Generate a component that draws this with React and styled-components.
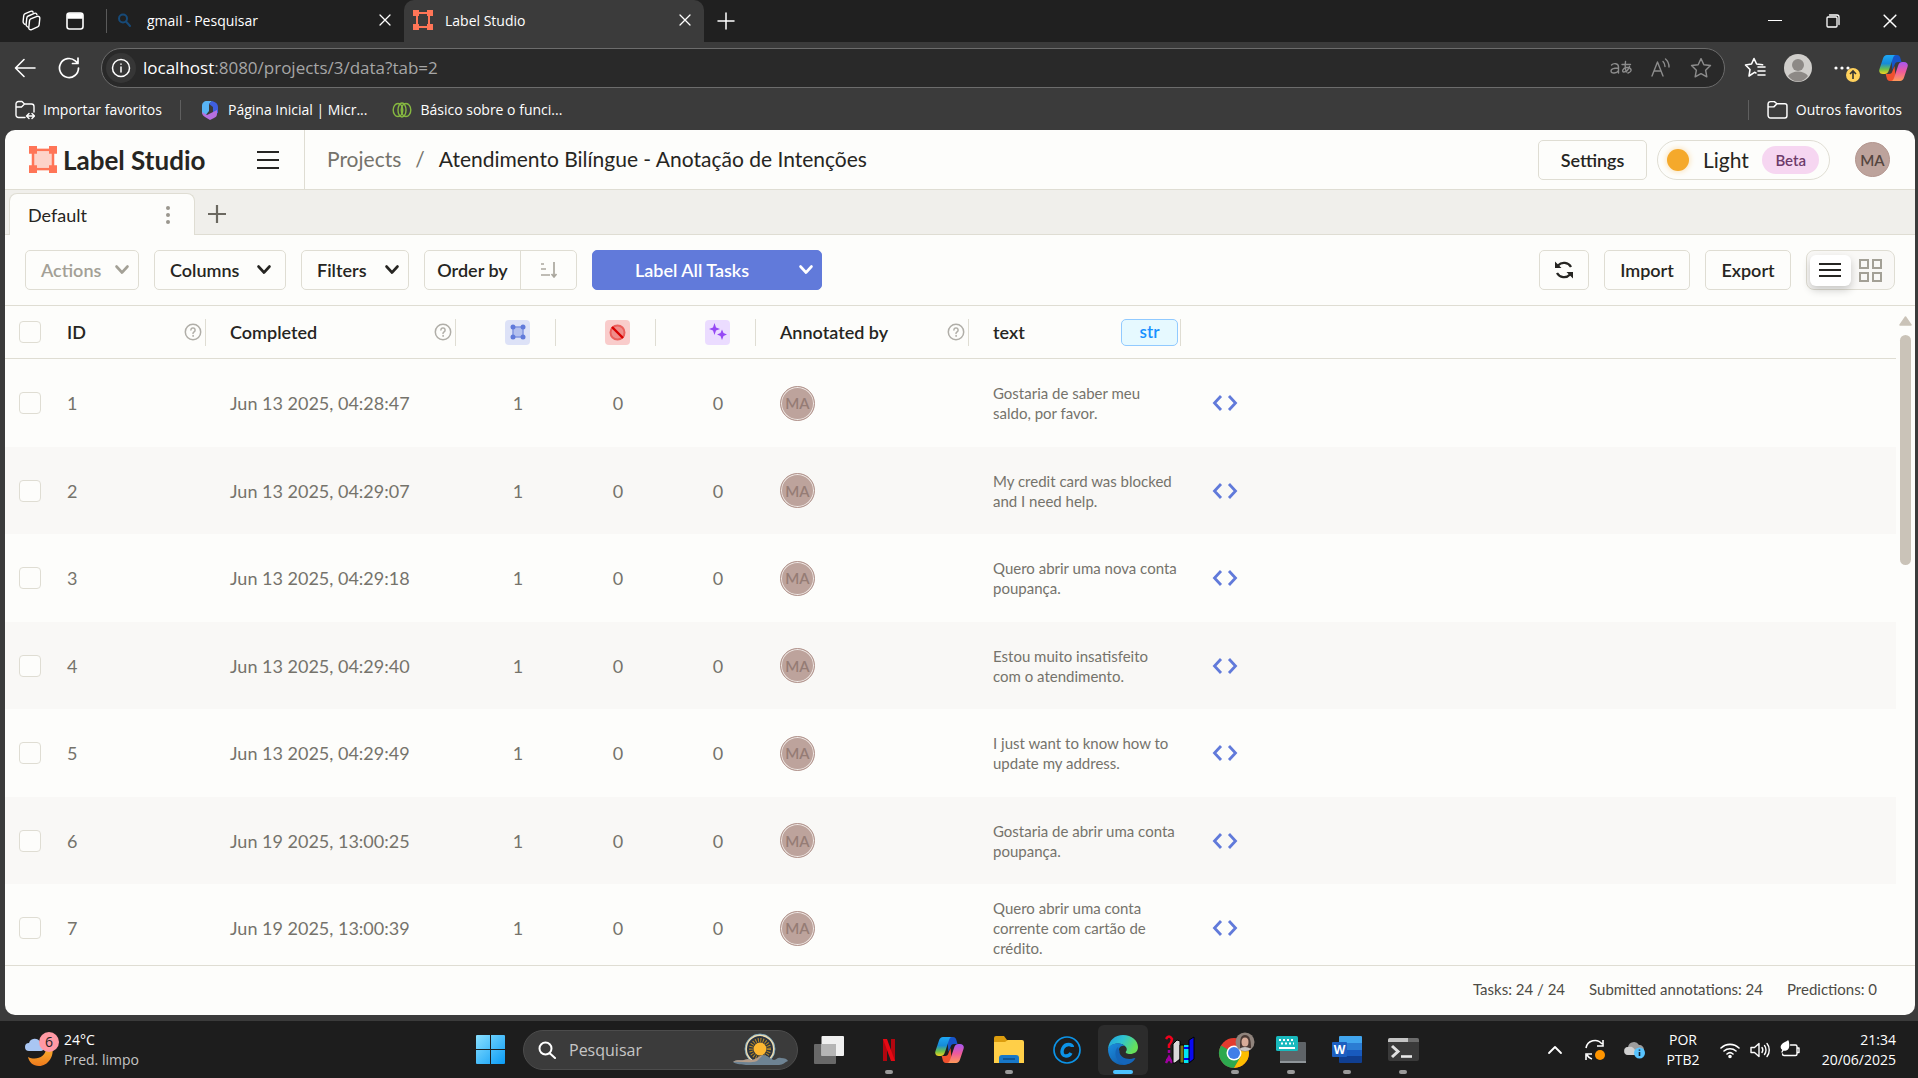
import React from "react";
import styled, { createGlobalStyle, css } from "styled-components";

const UI = '"Open Sans", "Noto Sans", sans-serif';
const APP = 'Lato, "Liberation Sans", sans-serif';
const LINE = "#dfddd3";

const Global = createGlobalStyle`
  *, *::before, *::after { box-sizing: border-box; }
  html, body { margin: 0; padding: 0; height: 100%; overflow: hidden; }
  button, input { font: inherit; color: inherit; margin: 0; }
  button { background: none; border: 0; padding: 0; cursor: pointer; }
  a { color: inherit; text-decoration: none; }
  svg { display: block; flex: none; }
`;

const Desktop = styled.div`
  display: flex;
  flex-direction: column;
  height: 100vh;
  background: #3b3b3b;
  font-family: ${UI};
`;

/* ---------- browser chrome ---------- */

const TabStrip = styled.header`
  display: flex;
  align-items: center;
  height: 42px;
  flex: none;
  background: #202020;
  color: #fff;
  font-size: 14px;
`;
const StripTools = styled.div`
  display: flex;
  align-items: center;
  gap: 24px;
  width: 107px;
  padding-left: 20px;
  height: 24px;
  border-right: 1px solid #5a5a5a;
`;
const IconButton = styled.button`
  display: flex;
  align-items: center;
  justify-content: center;
  flex: none;
  width: ${(p) => p.$w || 24}px;
  height: ${(p) => p.$h || 24}px;
`;
const BrowserTab = styled.div`
  display: flex;
  align-items: center;
  gap: ${(p) => (p.$active ? 12 : 15)}px;
  width: ${(p) => (p.$active ? 300 : 297)}px;
  height: 42px;
  padding: 0 13px 2px 9px;
  border-radius: 10px 10px 0 0;
  background: ${(p) => (p.$active ? "#3b3b3b" : "transparent")};
`;
const TabTitle = styled.a`
  flex: 1;
  white-space: nowrap;
`;
const WindowControls = styled.div`
  display: flex;
  margin-left: auto;
`;

const NavBar = styled.div`
  display: flex;
  align-items: center;
  height: 51px;
  flex: none;
  padding: 0 10px 0 13px;
  color: #fff;
`;
const NavButtons = styled.div`
  display: flex;
  gap: 20px;
  width: 88px;
`;
const Omnibox = styled.label`
  display: flex;
  align-items: center;
  flex: 1;
  height: 40px;
  padding: 0 11px 0 4px;
  border: 1px solid #6c6c6c;
  border-radius: 20px;
  background: #292929;
  font-size: 17px;
`;
const InfoDisc = styled.span`
  display: flex;
  align-items: center;
  justify-content: center;
  width: 30px;
  height: 30px;
  margin-right: 7px;
  border-radius: 50%;
  background: #363636;
`;
const UrlInput = styled.input`
  flex: 1;
  min-width: 0;
  padding: 0;
  border: 0;
  outline: 0;
  background: none;
  color: #a6a6a6;
`;
const OmniActions = styled.div`
  display: flex;
  gap: 16px;
  color: #8c8c8c;
`;
const NavActions = styled.div`
  display: flex;
  align-items: center;
  gap: 16px;
  padding-left: 17px;
`;
const Favorites = styled.nav`
  display: flex;
  align-items: center;
  height: 37px;
  flex: none;
  padding: 0 16px 4px 15px;
  color: #fff;
  font-size: 14px;
`;
const Favorite = styled.a`
  display: flex;
  align-items: center;
  gap: 8px;
  margin-right: ${(p) => p.$after || 0}px;
  margin-left: ${(p) => p.$before || 0}px;
  white-space: nowrap;
`;
const FavoritesRule = styled.span`
  width: 1px;
  height: 20px;
  background: #5f5f5f;
  margin-left: ${(p) => (p.$end ? "auto" : 0)};
`;

/* ---------- Label Studio page ---------- */

const Page = styled.main`
  display: flex;
  flex-direction: column;
  flex: 1;
  min-height: 0;
  margin: 0 3px 6px 5px;
  border-radius: 10px;
  overflow: hidden;
  background: #fdfdfb;
  color: #262522;
  font-family: ${APP};
  font-size: 18px;
`;
const TopBar = styled.header`
  display: flex;
  align-items: center;
  height: 60px;
  flex: none;
  border-bottom: 1px solid ${LINE};
`;
const Brand = styled.div`
  display: flex;
  align-items: center;
  justify-content: space-between;
  width: 300px;
  height: 100%;
  padding: 0 25px 0 24px;
  border-right: 1px solid ${LINE};
`;
const BrandLink = styled.a`
  display: flex;
  align-items: center;
  gap: 6px;
  font-size: 26px;
  font-weight: 700;
`;
const Crumbs = styled.nav`
  display: flex;
  flex: 1;
  gap: 14px;
  padding: 0 0 2px 22px;
  font-size: 21px;
  white-space: nowrap;
`;
const Crumb = styled.a`
  color: ${(p) => (p.$current ? "#262522" : "#75736b")};
`;
const TopActions = styled.div`
  display: flex;
  align-items: center;
  gap: 10px;
  padding-right: 25px;
`;
const Button = styled.button`
  display: flex;
  align-items: center;
  justify-content: ${(p) => (p.$menu ? "space-between" : "center")};
  width: ${(p) => p.$w}px;
  height: 40px;
  padding: ${(p) => (p.$menu ? "0 8px 0 15px" : "0")};
  border: 1px solid ${LINE};
  border-radius: 5px;
  background: #fdfdfb;
  font-size: 18px;
  font-weight: 600;
  white-space: nowrap;
  ${(p) => p.$roomy && css`padding-right: 13px;`}
  &:disabled { color: #a3a096; }
`;
const ThemeToggle = styled.button`
  display: flex;
  align-items: center;
  width: 173px;
  height: 40px;
  padding: 0 10px 0 9px;
  border: 1px solid ${LINE};
  border-radius: 20px;
  font-size: 21px;
`;
const Sun = styled.span`
  width: 22px;
  height: 22px;
  margin-right: 14px;
  border-radius: 50%;
  background: #f5a92b;
  box-shadow: 0 0 6px #f9d9a4;
`;
const Beta = styled.span`
  margin-left: auto;
  padding: 0 13px;
  border-radius: 14px;
  background: #f6d6f1;
  color: #6d3b6a;
  font-size: 15px;
  font-weight: 600;
  line-height: 28px;
`;
const Avatar = styled.span`
  display: flex;
  align-items: center;
  justify-content: center;
  width: 35px;
  height: 35px;
  margin-left: ${(p) => (p.$user ? 15 : 0)}px;
  border: 1px solid #b3968f;
  border-radius: 50%;
  background: #bda39c;
  color: ${(p) => (p.$user ? "#54463f" : "#957c75")};
  font-size: 15px;
  font-weight: 600;
  ${(p) => !p.$user && css`box-shadow: inset 0 0 0 1px #efe8e4;`}
`;

const ViewTabs = styled.div`
  display: flex;
  align-items: flex-end;
  height: 45px;
  flex: none;
  padding-left: 4px;
  background: #f0efeb;
  box-shadow: inset 0 -1px ${LINE};
`;
const ViewTab = styled.div`
  display: flex;
  align-items: center;
  justify-content: space-between;
  width: 186px;
  height: 42px;
  padding: 0 18px;
  border: 1px solid ${LINE};
  border-bottom: 0;
  border-radius: 8px 8px 0 0;
  background: #fdfdfb;
`;

const Toolbar = styled.div`
  display: flex;
  align-items: center;
  justify-content: space-between;
  height: 71px;
  flex: none;
  padding: 0 20px;
  border-bottom: 1px solid ${LINE};
`;
const ToolGroup = styled.div`
  display: flex;
  gap: 15px;
`;
const Split = styled.div`
  display: flex;
  height: 40px;
  border: 1px solid ${(p) => (p.$primary ? "#617ada" : LINE)};
  border-radius: 5px;
  overflow: hidden;
  background: ${(p) => (p.$primary ? "#617ada" : "#fdfdfb")};
  color: ${(p) => (p.$primary ? "#fff" : "#262522")};
`;
const SplitPart = styled.button`
  display: flex;
  align-items: center;
  justify-content: center;
  width: ${(p) => p.$w}px;
  font-size: 18px;
  font-weight: 600;
  border-left: ${(p) => (p.$divided ? `1px solid ${LINE}` : 0)};
`;
const Segments = styled.div`
  display: flex;
  align-items: center;
  width: 89px;
  height: 40px;
  padding: 0 3px;
  border: 1px solid ${LINE};
  border-radius: 8px;
  background: #f9f8f6;
`;
const Segment = styled.button`
  display: flex;
  align-items: center;
  justify-content: center;
  width: 41px;
  height: 31px;
  border-radius: 6px;
  ${(p) => p.$on && css`background: #fff; box-shadow: 0 4px 8px #0003;`}
`;

const DataArea = styled.div`
  display: flex;
  flex: 1;
  min-height: 0;
`;
const TableClip = styled.div`
  flex: 1;
  min-width: 0;
  overflow: hidden;
`;
const Table = styled.table`
  width: 100%;
  table-layout: fixed;
  border-collapse: separate;
  border-spacing: 0;
`;
const Col = styled.col`
  width: ${(p) => (p.$w ? `${p.$w}px` : "auto")};
`;
const Th = styled.th`
  height: 53px;
  padding: 0;
  border-bottom: 1px solid ${LINE};
  font-size: 18px;
  font-weight: 600;
  text-align: left;
`;
const ThInner = styled.div`
  display: flex;
  align-items: center;
  justify-content: ${(p) => (p.$center ? "center" : "space-between")};
  height: 27px;
  padding: 0 ${(p) => (p.$center ? 0 : p.$tight ? 2 : 3)}px 0 24px;
  border-right: 1px solid ${LINE};
`;
const TypeTag = styled.span`
  width: 57px;
  height: 27px;
  border: 1px solid #91caff;
  border-radius: 5px;
  background: #e6f9ff;
  color: #1890ff;
  font-size: 17px;
  line-height: 24px;
  text-align: center;
`;
const MiniBadge = styled.span`
  display: flex;
  align-items: center;
  justify-content: center;
  width: 25px;
  height: 25px;
  border-radius: 4px;
  background: ${(p) => p.$bg};
`;
const Row = styled.tr`
  height: 88px;
  &:nth-child(even) {
    height: 87px;
    background: #f9f8f6;
  }
`;
const Td = styled.td`
  padding: 0 0 0 24px;
  color: #75736b;
  font-size: 18px;
  text-align: ${(p) => (p.$center ? "center" : "left")};
  vertical-align: middle;
`;
const CheckCell = styled.td`
  padding: 0 0 0 14px;
  vertical-align: middle;
`;
const Check = styled.input`
  display: block;
  appearance: none;
  width: 22px;
  height: 22px;
  border: 1px solid ${LINE};
  border-radius: 4px;
  background: #fdfdfb;
`;
const Snippet = styled.p`
  width: 184px;
  margin: 0;
  font-size: 15px;
  line-height: 20px;
`;
const Scrollbar = styled.div`
  display: flex;
  flex-direction: column;
  align-items: center;
  gap: 9px;
  width: 19px;
  padding: 10px 0 0;
`;
const Thumb = styled.div`
  width: 11px;
  height: 230px;
  border-radius: 6px;
  background: #cac3b8;
`;
const Summary = styled.footer`
  display: flex;
  align-items: center;
  justify-content: flex-end;
  gap: 24px;
  height: 50px;
  flex: none;
  padding: 0 38px 3px 0;
  border-top: 1px solid ${LINE};
  color: #4d4b45;
  font-size: 15px;
`;

/* ---------- Windows taskbar ---------- */

const Taskbar = styled.footer`
  display: grid;
  grid-template-columns: 462px 1fr auto;
  align-items: center;
  height: 57px;
  flex: none;
  padding-right: 22px;
  background: #1d1d1d;
  color: #fff;
  font-size: 14px;
`;
const Weather = styled.button`
  display: flex;
  align-items: center;
  gap: 4px;
  padding-left: 24px;
  text-align: left;
  line-height: 20px;
`;
const Dim = styled.span`
  display: block;
  color: #c4c4c4;
`;
const Apps = styled.div`
  display: flex;
  align-items: center;
`;
const TaskSearch = styled.label`
  display: flex;
  align-items: center;
  width: 275px;
  height: 40px;
  padding: 0 9px 0 14px;
  margin: 0 1px 0 5px;
  border: 1px solid #4c4c4c;
  border-radius: 20px;
  background: #3b3b3b;
`;
const TaskInput = styled.input`
  flex: 1;
  min-width: 0;
  padding: 0 0 0 13px;
  border: 0;
  outline: 0;
  background: none;
  font-size: 16px;
  &::placeholder { color: #c6c6c6; opacity: 1; }
`;
const Task = styled.button`
  display: grid;
  grid-template-rows: 40px 5px;
  align-content: end;
  justify-items: center;
  align-items: center;
  width: ${(p) => (p.$wide ? 60 : 50)}px;
  height: 50px;
  margin: 0 ${(p) => (p.$wide ? 0 : 3)}px;
  border-radius: 6px;
  background: ${(p) => (p.$active ? "#2c2c2c" : "none")};
  &::after {
    content: "";
    width: ${(p) => (p.$active ? 20 : 8)}px;
    height: 4px;
    border-radius: 2px;
    background: ${(p) => (p.$active ? "#4cc2ff" : p.$running ? "#9a9a9a" : "transparent")};
  }
`;
const StartButton = styled.button`
  display: flex;
  justify-content: center;
  width: 56px;
`;
const Tray = styled.div`
  display: flex;
  align-items: center;
  line-height: 20px;
`;
const TrayItem = styled.button`
  display: flex;
  align-items: center;
  justify-content: center;
  gap: 10px;
  width: ${(p) => p.$w}px;
  text-align: center;
`;
const Clock = styled.button`
  width: 87px;
  text-align: right;
`;

/* ---------- icons ---------- */

const Stroke = ({ size = 20, w = 1.5, children, box = 20 }) => (
  <svg width={size} height={size} viewBox={`0 0 ${box} ${box}`} fill="none" stroke="currentColor" strokeWidth={w} strokeLinecap="round" strokeLinejoin="round">
    {children}
  </svg>
);
const CloseIcon = ({ size = 12 }) => (
  <Stroke size={size} box={12} w={1.3}><path d="M1 1l10 10M11 1L1 11" /></Stroke>
);
const Chevron = () => (
  <Stroke size={16} box={16} w={2.6}><path d="M2.500 4.500L8 10.500l5.500-6" /></Stroke>
);
const LabelMark = ({ size, height }) => (
  <svg width={size} height={height} viewBox="0 0 28 28" preserveAspectRatio="none">
    <rect x="4" y="4" width="20" height="20" fill="#ff7557" fillOpacity=".3" stroke="#ff7557" strokeWidth="2.500" />
    <path fill="#ff7557" d="M0 0h8v8H0zM20 0h8v8h-8zM0 20h8v8H0zM20 20h8v8h-8z" />
  </svg>
);
const TabMark = () => (
  <svg width="20" height="20" viewBox="0 0 20 20">
    <path fill="none" stroke="#ff7557" strokeWidth="2" d="M4 3h12v14H4z" />
    <path fill="#ff7557" d="M0 0h6v6H0zM14 0h6v6h-6zM0 14h6v6H0zM14 14h6v6h-6z" />
  </svg>
);
const Help = () => (
  <svg width="18" height="18" viewBox="0 0 18 18" fill="none" stroke="#b0aea8" strokeWidth="1.500" strokeLinecap="round">
    <circle cx="9" cy="9" r="7.700" />
    <path d="M6.900 7a2.100 2.100 0 1 1 3.200 1.800c-.7.500-1.100.9-1.100 1.700" />
    <circle cx="9" cy="12.900" r=".5" fill="#b0aea8" strokeWidth=".8" />
  </svg>
);
const Code = () => (
  <svg width="26" height="18" viewBox="0 0 26 18" fill="none" stroke="#617ada" strokeWidth="2.800">
    <path d="M9 2L2.500 9 9 16M17 2l6.500 7-6.500 7" />
  </svg>
);
const Copilot = () => (
  <svg width="29" height="28" viewBox="0 0 29 28">
    <defs>
      <linearGradient id="cpA" x1="0" y1="0" x2="0" y2="1">
        <stop offset="0" stopColor="#1ea7f5" /><stop offset=".45" stopColor="#168bd8" />
        <stop offset=".75" stopColor="#6cc04a" /><stop offset="1" stopColor="#f5d21f" />
      </linearGradient>
      <linearGradient id="cpB" x1="0" y1="0" x2="0" y2="1">
        <stop offset="0" stopColor="#a557f2" /><stop offset=".5" stopColor="#ee5a9c" /><stop offset="1" stopColor="#ff9a5a" />
      </linearGradient>
    </defs>
    <path fill="#1654c9" d="M12 1h6c2 0 3 1.500 3.500 3.500L22.500 8H19c-2 0-3 1-3.500 3l-2 5z" />
    <path fill="#f0512e" d="M17 27h-6c-2 0-3-1.500-3.400-3.500L6.700 20H10c2 0 3-1 3.500-3l2-5z" />
    <path fill="url(#cpA)" d="M8 1h9c-1.500 0-2.300 1-3 3l-4 12c-.8 2.500-2 4-4.500 4H4c-3 0-4.500-2-3.500-5L4 4.500C4.700 2.200 6 1 8 1z" />
    <path fill="url(#cpB)" d="M21 27h-9c1.500 0 2.300-1 3-3l4-12c.8-2.500 2-4 4.500-4H25c3 0 4.500 2 3.500 5L25 23.500c-.7 2.300-2 3.500-4 3.500z" />
  </svg>
);

const BrowserChrome = () => (
  <>
    <TabStrip>
      <StripTools>
        <IconButton $w={22} aria-label="Workspaces">
          <Stroke size={22} box={22} w={1.4}>
            <g transform="rotate(6 11 11)">
              <path d="M10.500 9l6-3.200c1.500-.7 3 0 3 1.700v6.500c0 1-.5 1.700-1.300 2.200l-5.700 3.300c-1.500.8-3 0-3-1.500v-7c0-.9.300-1.600 1-2z" />
              <path d="M9 17.500l-1-.4c-1-.4-1.500-1.200-1.500-2.200V8.500c0-1 .5-1.700 1.300-2.200L13.500 3c1.200-.6 2.400-.2 2.700 1" />
              <path d="M5.500 15l-1-.5C3.700 14 3.200 13.300 3.200 12.300V6.500c0-1 .5-1.700 1.300-2.200L9.500 1.500c1-.6 2.200-.4 2.700.5" />
            </g>
          </Stroke>
        </IconButton>
        <IconButton $w={18} aria-label="Tab actions">
          <Stroke size={18} box={18} w={1.6}><rect x="1" y="1" width="16" height="16" rx="2.500" /><path fill="currentColor" d="M2 2h14v4H2z" /></Stroke>
        </IconButton>
      </StripTools>
      <BrowserTab>
        <Stroke size={16} box={16} w={2}><g stroke="#174a78"><circle cx="7" cy="6.500" r="4" /><path d="M10 9.500l4 4.500" /></g></Stroke>
        <TabTitle href="#gmail">gmail - Pesquisar</TabTitle>
        <IconButton $w={12} aria-label="Close tab"><CloseIcon /></IconButton>
      </BrowserTab>
      <BrowserTab $active>
        <TabMark />
        <TabTitle href="#label-studio">Label Studio</TabTitle>
        <IconButton $w={12} aria-label="Close tab"><CloseIcon /></IconButton>
      </BrowserTab>
      <IconButton $w={44} aria-label="New tab"><Stroke size={18} box={18} w={1.5}><path d="M9 1v16M1 9h16" /></Stroke></IconButton>
      <WindowControls>
        <IconButton $w={58} aria-label="Minimize"><Stroke size={14} box={14} w={1.2}><path d="M.5 6.500h13" /></Stroke></IconButton>
        <IconButton $w={58} aria-label="Restore"><Stroke size={14} box={14} w={1.3}><rect x="1" y="3" width="10" height="10" rx="1" /><path d="M3.500 1H11c1.200 0 2 .8 2 2v7.500" /></Stroke></IconButton>
        <IconButton $w={56} aria-label="Close"><CloseIcon size={14} /></IconButton>
      </WindowControls>
    </TabStrip>
    <NavBar>
      <NavButtons>
        <IconButton aria-label="Back"><Stroke size={22} box={22} w={1.6}><path d="M21 11H2M10 2.500L1.500 11l8.500 8.500" /></Stroke></IconButton>
        <IconButton aria-label="Refresh"><Stroke size={22} box={22} w={1.7}><path d="M20.500 11a9.500 9.500 0 1 1-3.200-7.100L19.500 6M20 1v5.500h-5.500" /></Stroke></IconButton>
      </NavButtons>
      <Omnibox>
        <InfoDisc><Stroke size={20} w={1.500}><circle cx="10" cy="10" r="8.500" /><path d="M10 9v5M10 6v.2" /></Stroke></InfoDisc>
        <span>localhost</span>
        <UrlInput aria-label="Address" defaultValue=":8080/projects/3/data?tab=2" />
        <OmniActions>
          <IconButton aria-label="Translate">
            <Stroke size={24} box={24} w={1.4}>
              <path d="M2.500 9c2-2 7-2 7 2v6M9.500 12c-4 0-7.500.500-7.500 3 0 3 6 2.500 7.500-.500" />
              <path d="M13 8.500h8.500M16.500 5.500c-.5 4-.5 8 1 10.500M20.500 10.500c-1 3-3.500 5.500-5.700 5.500-2 0-1.500-4 2.700-4.500 5-.5 6.500 4 1.500 5.500" />
            </Stroke>
          </IconButton>
          <IconButton aria-label="Read aloud"><Stroke size={20} w={1.4}><path d="M1 18L6.500 4 12 18M3 13h7M12 3.500c1.500 1.500 2 3 2 5M14.500 1c2.500 2.200 3.500 5 3.500 8" /></Stroke></IconButton>
          <IconButton aria-label="Add to favorites"><Stroke size={22} w={1.3}><path d="M10 1.500l2.600 5.500 6 .8-4.400 4.200 1.100 6L10 15.100 4.700 18l1.100-6L1.400 7.800l6-.8z" /></Stroke></IconButton>
        </OmniActions>
      </Omnibox>
      <NavActions>
        <IconButton $w={26} aria-label="Favorites"><Stroke size={22} box={22} w={1.6}><path d="M12 16l-1.500-.7L5 19l1-6.500L1.500 8l6-1L10 1.500 12.600 7l6 .8M14 10h7M14 14h7M14 18h7" /></Stroke></IconButton>
        <IconButton $w={28} aria-label="Profile">
          <svg width="28" height="28" viewBox="0 0 28 28"><circle cx="14" cy="14" r="14" fill="#d0cecb" /><circle cx="14" cy="11" r="6" fill="#8d8986" /><path d="M4 22c2-3 6-4.500 10-4.500S22 19 24 22c-2.500 3.500-6 5.500-10 5.500S6.500 25.500 4 22z" fill="#8d8986" /></svg>
        </IconButton>
        <IconButton $w={34} $h={28} aria-label="Settings and more">
          <svg width="34" height="28" viewBox="0 0 34 28"><g fill="#fff"><circle cx="8" cy="14" r="1.600" /><circle cx="14" cy="14" r="1.600" /><circle cx="20" cy="14" r="1.600" /></g><circle cx="25" cy="21" r="7" fill="#ffd15c" /><path d="M25 25v-8M22 20l3-3 3 3" fill="none" stroke="#333" strokeWidth="1.600" /></svg>
        </IconButton>
        <IconButton $w={30} $h={28} aria-label="Copilot"><Copilot /></IconButton>
      </NavActions>
    </NavBar>
    <Favorites>
      <Favorite href="#import" $after={18}>
        <Stroke size={20} w={1.4}><path d="M10 17.500H3.500c-1.500 0-2.500-1-2.500-2.500V4c0-1.500 1-2.500 2.500-2.500H7L9.500 4h7C18 4 19 5 19 6.500V12M1 7h5.500l3-3M12 16h7M14 13.500L11.500 16l2.500 2.500M17 13.500l2.500 2.500-2.500 2.500" /></Stroke>
        Importar favoritos
      </Favorite>
      <FavoritesRule />
      <Favorite href="#m365" $before={19} $after={25}>
        <svg width="20" height="20" viewBox="0 0 20 20"><path fill="#58b4f5" d="M7 1h5l-3 3v7l-4 5-3-3V6c0-3 2-5 5-5z" /><path fill="#3f5fe0" d="M12 1c4 1 6 3 6 6v6l-5 2V7L9 4z" /><path fill="#b66fe0" d="M2 12l5 3 4-2 6-3v4c0 2-1 3-3 4l-4 2-5-3c-2-1-3-3-3-5z" /></svg>
        Página Inicial | Micr...
      </Favorite>
      <Favorite href="#basico">
        <Stroke size={20} w={1.4}><g stroke="#86b840"><ellipse cx="6" cy="10" rx="4.800" ry="6.500" /><ellipse cx="10" cy="10" rx="4" ry="7" /><ellipse cx="14" cy="10" rx="4.800" ry="6.500" /></g></Stroke>
        Básico sobre o funci...
      </Favorite>
      <FavoritesRule $end />
      <Favorite href="#outros" $before={18}>
        <Stroke size={21} w={1.4}><path d="M1 5c0-1.500 1-2.500 2.500-2.500H7l2.500 2H17c1.200 0 2 .9 2 2V16c0 1.200-.8 2-2 2H3.500C2 18 1 17 1 15.500zM1 7.500h5.500l3-3" /></Stroke>
        Outros favoritos
      </Favorite>
    </Favorites>
  </>
);

const ROWS = [
  [1, "Jun 13 2025, 04:28:47", "Gostaria de saber meu saldo, por favor."],
  [2, "Jun 13 2025, 04:29:07", "My credit card was blocked and I need help."],
  [3, "Jun 13 2025, 04:29:18", "Quero abrir uma nova conta poupança."],
  [4, "Jun 13 2025, 04:29:40", "Estou muito insatisfeito com o atendimento."],
  [5, "Jun 13 2025, 04:29:49", "I just want to know how to update my address."],
  [6, "Jun 19 2025, 13:00:25", "Gostaria de abrir uma conta poupança."],
  [7, "Jun 19 2025, 13:00:39", "Quero abrir uma conta corrente com cartão de crédito."],
];

const TaskTable = () => (
  <DataArea>
    <TableClip>
      <Table>
        <colgroup>
          <Col $w={38} /><Col $w={163} /><Col $w={250} /><Col $w={100} /><Col $w={100} /><Col $w={100} /><Col $w={213} /><Col $w={212} /><Col />
        </colgroup>
        <thead>
          <tr>
            <Th as={CheckCell}><Check type="checkbox" aria-label="Select all tasks" /></Th>
            <Th><ThInner>ID<Help /></ThInner></Th>
            <Th><ThInner>Completed<Help /></ThInner></Th>
            <Th>
              <ThInner $center>
                <MiniBadge $bg="#dde2f7"><svg width="16" height="16" viewBox="0 0 16 16"><path d="M3 3h10v10H3z" fill="#b4c0ee" stroke="#8296e2" strokeWidth="1.500" /><g fill="#617ada"><circle cx="3" cy="3" r="2.500" /><circle cx="13" cy="3" r="2.500" /><circle cx="3" cy="13" r="2.500" /><circle cx="13" cy="13" r="2.500" /></g></svg></MiniBadge>
              </ThInner>
            </Th>
            <Th>
              <ThInner $center>
                <MiniBadge $bg="#f9cccb"><svg width="17" height="17" viewBox="0 0 17 17"><circle cx="8.500" cy="8.500" r="7" fill="#ef8d8b" stroke="#ea5f5c" strokeWidth="2" /><path d="M3 3l11 11" stroke="#d90000" strokeWidth="2.400" /></svg></MiniBadge>
              </ThInner>
            </Th>
            <Th>
              <ThInner $center>
                <MiniBadge $bg="#ebdcff"><svg width="18" height="18" viewBox="0 0 18 18" fill="#9548f5"><path d="M5.500 0l1.500 4.500L11 6 7 7.500 5.500 12 4 7.500 0 6l4-1.500z" /><path d="M13 6.500l1.500 3.500L18 11.500 14.500 13 13 17l-1.500-4L8 11.500l3.500-1.500z" /></svg></MiniBadge>
              </ThInner>
            </Th>
            <Th><ThInner>Annotated by<Help /></ThInner></Th>
            <Th><ThInner $tight>text<TypeTag>str</TypeTag></ThInner></Th>
            <Th />
          </tr>
        </thead>
        <tbody>
          {ROWS.map(([id, date, text]) => (
            <Row key={id}>
              <CheckCell><Check type="checkbox" aria-label={`Select task ${id}`} /></CheckCell>
              <Td>{id}</Td>
              <Td>{date}</Td>
              <Td $center>1</Td>
              <Td $center>0</Td>
              <Td $center>0</Td>
              <Td><Avatar>MA</Avatar></Td>
              <Td><Snippet>{text}</Snippet></Td>
              <Td><IconButton $w={40} aria-label={`Show source of task ${id}`}><Code /></IconButton></Td>
            </Row>
          ))}
        </tbody>
      </Table>
    </TableClip>
    <Scrollbar>
      <svg width="13" height="10" viewBox="0 0 13 10"><path d="M6.500 1L12 9H1z" fill="#cac3b8" stroke="#cac3b8" strokeLinejoin="round" strokeWidth="1.500" /></svg>
      <Thumb />
    </Scrollbar>
  </DataArea>
);

const LabelStudio = () => (
  <Page>
    <TopBar>
      <Brand>
        <BrandLink href="#home"><LabelMark size={28} height={27} />Label Studio</BrandLink>
        <IconButton $w={22} aria-label="Menu"><svg width="22" height="18" viewBox="0 0 22 18"><path d="M0 1h22M0 9h22M0 17h22" stroke="#262522" strokeWidth="2" /></svg></IconButton>
      </Brand>
      <Crumbs>
        <Crumb href="#projects">Projects</Crumb>
        <Crumb as="span">/</Crumb>
        <Crumb href="#project" $current>Atendimento Bilíngue - Anotação de Intenções</Crumb>
      </Crumbs>
      <TopActions>
        <Button $w={109}>Settings</Button>
        <ThemeToggle><Sun />Light<Beta>Beta</Beta></ThemeToggle>
        <Avatar $user>MA</Avatar>
      </TopActions>
    </TopBar>
    <ViewTabs>
      <ViewTab>
        <a href="#default">Default</a>
        <IconButton $w={16} aria-label="Tab options"><svg width="6" height="20" viewBox="0 0 6 20" fill="#9a978e"><circle cx="3" cy="3" r="2" /><circle cx="3" cy="10" r="2" /><circle cx="3" cy="17" r="2" /></svg></IconButton>
      </ViewTab>
      <IconButton $w={44} $h={42} aria-label="Add tab"><svg width="18" height="18" viewBox="0 0 18 18"><path d="M9 0v18M0 9h18" stroke="#6b6860" strokeWidth="2.200" /></svg></IconButton>
    </ViewTabs>
    <Toolbar>
      <ToolGroup>
        <Button $w={114} $menu disabled>Actions<Chevron /></Button>
        <Button $w={132} $menu $roomy>Columns<Chevron /></Button>
        <Button $w={108} $menu>Filters<Chevron /></Button>
        <Split>
          <SplitPart $w={95}>Order by</SplitPart>
          <SplitPart $w={56} $divided aria-label="Sort direction"><svg width="20" height="18" viewBox="0 0 20 18" fill="none" stroke="#aaa79e" strokeWidth="1.700"><path d="M2 3h3M2 8h5M2 14h9M15 1v14M12.500 13l2.500 3 2.500-3" /></svg></SplitPart>
        </Split>
        <Split $primary>
          <SplitPart $w={198}>Label All Tasks</SplitPart>
          <SplitPart $w={30} aria-label="More labeling options"><Chevron /></SplitPart>
        </Split>
      </ToolGroup>
      <ToolGroup>
        <Button $w={50} aria-label="Refresh"><svg width="20" height="20" viewBox="0 0 20 20" fill="none" stroke="#262522" strokeWidth="2.300"><path d="M17 7A8 8 0 0 0 4 5.500M3 13a8 8 0 0 0 13 1.500" /><path d="M1 1.500V8h6.500zM19 18.500V12h-6.500z" fill="#262522" stroke="none" /></svg></Button>
        <Button $w={86}>Import</Button>
        <Button $w={86}>Export</Button>
        <Segments>
          <Segment $on aria-label="List view" aria-pressed="true"><svg width="22" height="16" viewBox="0 0 22 16"><path d="M0 2h22M0 8h22M0 14h22" stroke="#262522" strokeWidth="2.200" /></svg></Segment>
          <Segment aria-label="Grid view" aria-pressed="false"><svg width="23" height="23" viewBox="0 0 23 23" fill="none" stroke="#a3a096" strokeWidth="2"><path d="M1 1h8v8H1zM14 1h8v8h-8zM1 14h8v8H1zM14 14h8v8h-8z" /></svg></Segment>
        </Segments>
      </ToolGroup>
    </Toolbar>
    <TaskTable />
    <Summary>
      <span>Tasks: 24 / 24</span>
      <span>Submitted annotations: 24</span>
      <span>Predictions: 0</span>
    </Summary>
  </Page>
);

const WindowsTaskbar = () => (
  <Taskbar>
    <Weather>
      <svg width="36" height="36" viewBox="0 0 36 36">
        <defs><linearGradient id="moon" x1="0" y1="0" x2="0" y2="1"><stop offset="0" stopColor="#fbb62f" /><stop offset="1" stopColor="#ee7a1d" /></linearGradient></defs>
        <path fill="url(#moon)" d="M28 14c3 10-4 20-13 20-6 0-10-4-11-9 8 4 18 0 18-9z" />
        <path fill="#a9c6f3" d="M5 19a4 4 0 0 1 0-8 6 6 0 0 1 11-1c3 0 5 2 5 4.500S19 19 16 19z" />
        <circle cx="25" cy="10" r="10" fill="#ff99a4" />
        <text x="25" y="15" textAnchor="middle" fontFamily="Open Sans" fontSize="14" fill="#222">6</text>
      </svg>
      <span>24°C<Dim>Pred. limpo</Dim></span>
    </Weather>
    <Apps>
      <StartButton aria-label="Start">
        <svg width="29" height="29" viewBox="0 0 29 29">
          <defs><linearGradient id="win" x1="0" y1="0" x2="1" y2="1"><stop offset="0" stopColor="#8ae0ff" /><stop offset="1" stopColor="#0a9bf5" /></linearGradient></defs>
          <path fill="url(#win)" d="M0 1q0-1 1-1h13v14H0zM15 0h13q1 0 1 1v13H15zM0 15h14v14H1q-1 0-1-1zM15 15h14v13q0 1-1 1H15z" />
        </svg>
      </StartButton>
      <TaskSearch>
        <Stroke size={18} box={18} w={2}><circle cx="7.500" cy="7.500" r="6" /><path d="M12 12.500l5 4.500" /></Stroke>
        <TaskInput placeholder="Pesquisar" aria-label="Pesquisar" />
        <svg width="55" height="34" viewBox="0 0 55 34">
          <circle cx="27" cy="16" r="14" fill="#2c3440" stroke="#f0dcae" strokeWidth="2" />
          <circle cx="27" cy="16" r="15" fill="none" stroke="#6fa4c6" strokeWidth=".8" />
          <circle cx="27" cy="16" r="9" fill="none" stroke="#b98a25" strokeWidth="4" strokeDasharray="1 1.500" />
          <circle cx="27" cy="16" r="6.500" fill="#fcb731" />
          <path fill="#6e8393" d="M0 29c4-3 8-1 11-2s4-1 8 0c5-1 7-4 11-5 5 0 7 4 11 5 3 0 3-3 7-2 4 0 6 1 7 3-3 1-5 4-9 4H13C9 31 4 32 0 29z" />
          <path fill="#b49c89" d="M0 29c4-3 8-1 11-2s4-1 8 0c5-1 7-4 11-5l-6 6c-8 3-16 0-24 1z" />
        </svg>
      </TaskSearch>
      <Task $wide aria-label="Task view"><svg width="30" height="28" viewBox="0 0 30 28"><rect y="8" width="22" height="20" rx="1" fill="#686868" /><rect x="7.500" width="22.500" height="20" rx="1" fill="#f0f0f0" /><path d="M7.500 8H22v12H7.500z" fill="#b5b5b5" /></svg></Task>
      <Task $wide $running aria-label="Netflix"><svg width="12" height="22" viewBox="0 0 12 22"><path d="M0 0h4v22l-4 .500zM8 0h4v22H8z" fill="#b1060f" /><path d="M0 0h4l8 22H8z" fill="#e50914" /></svg></Task>
      <Task $wide aria-label="Copilot"><Copilot /></Task>
      <Task $wide $running aria-label="File Explorer"><svg width="30" height="27" viewBox="0 0 30 27"><path d="M0 2q0-2 2-2h8l3 4h5v6H0z" fill="#dc9d0e" /><path d="M0 6h11l3-2h14q2 0 2 2v21H0z" fill="#ffcf48" /><path d="M5 27v-5q0-3 3-3h14q3 0 3 3v5z" fill="#1878c8" /><path d="M9 23h12" stroke="#0c4c86" strokeWidth="1.500" /></svg></Task>
      <Task aria-label="Clipchamp"><svg width="28" height="28" viewBox="0 0 28 28"><circle cx="14" cy="14" r="13" fill="none" stroke="#0c94e8" strokeWidth="1.700" /><path d="M19.500 11c0-3-7-4-9.500 1s0 8 3 8c2 0 4-1 5-3" fill="none" stroke="#0c94e8" strokeWidth="3.300" /></svg></Task>
      <Task $active aria-label="Microsoft Edge">
        <svg width="30" height="30" viewBox="0 0 30 30">
          <defs>
            <linearGradient id="edA" x1="0" y1="0" x2="1" y2=".4"><stop offset="0" stopColor="#1fa0e0" /><stop offset=".5" stopColor="#2fc3d0" /><stop offset="1" stopColor="#66e05a" /></linearGradient>
            <linearGradient id="edB" x1="0" y1="0" x2="1" y2="1"><stop offset="0" stopColor="#1b8ee0" /><stop offset="1" stopColor="#0f4f9c" /></linearGradient>
          </defs>
          <path fill="url(#edA)" d="M0 14C1 5 7 0 15 0c9 0 15 6 15 12 0 5-4 7-8 7-3 0-5-1-4-2.500 1-1.500 1-3 0-4.500C13 6 3 8 0 14z" />
          <path fill="url(#edB)" d="M0 14c2-6 12-8 17-3-5-1-7 3-6 7 1 5 7 8 16 5-3 5-7 7-12 7C6 30 0 23 0 14z" />
          <path fill="#1465b8" d="M10 12c-4 3-4 14 6 17.500C23 29 26 26 27.500 23 19 26 11 22 11.500 16z" />
        </svg>
      </Task>
      <Task aria-label="Library"><svg width="31" height="29" viewBox="0 0 31 29"><path d="M2 4q3-5 6 0 0 3-3 6v3" fill="none" stroke="#f0001c" strokeWidth="2.500" /><path d="M2 28l3-6 3 6M5 15v3M2 25h5" stroke="#a000a0" strokeWidth="2.500" fill="none" /><path d="M9 9l4-4 3 1v18l-5 4H9z" fill="#d8d8d8" stroke="#000" /><path d="M16 10h4v18h-4z" fill="#77751e" stroke="#000" /><path d="M20 10h5v18h-5z" fill="#00e5f5" /><path d="M20 13h5M20 24h5" stroke="#00f" strokeWidth="2" /><path d="M25 5l5-3v22l-5 4z" fill="#0a0af0" stroke="#000" /></svg></Task>
      <Task $running aria-label="Google Chrome">
        <svg width="40" height="38" viewBox="0 0 40 38">
          <circle cx="19" cy="22" r="15" fill="#e33b2e" />
          <path d="M6 14.500A15 15 0 0 0 19 37l7-11-7-4z" fill="#2da94f" />
          <path d="M34 22a15 15 0 0 1-15 15l7-12-2-8h9z" fill="#fdbd00" />
          <circle cx="19" cy="22" r="7.500" fill="#fff" /><circle cx="19" cy="22" r="6" fill="#3f7ee8" />
          <circle cx="30" cy="11" r="9.500" fill="#8f837c" /><path d="M25 18c0-9 0-14 5-14s6 6 6 13z" fill="#4b3a35" /><ellipse cx="30" cy="11" rx="3.500" ry="4.500" fill="#d9ac99" /><path d="M24 18q6-4 12 0-6 4-12 0z" fill="#c8c3c2" />
        </svg>
      </Task>
      <Task $running aria-label="Touch keyboard"><svg width="30" height="27" viewBox="0 0 30 27"><path d="M4 6h25q1 0 1 1v20H4z" fill="#5f6468" /><path d="M4 25h26v2H4z" fill="#8f9599" /><rect width="22" height="15" rx="1.500" fill="#19b9bd" /><path d="M3 4h16M5 7.500h13" stroke="#fff" strokeWidth="2" strokeDasharray="2 2" /><path d="M3 12h16" stroke="#fff" strokeWidth="2" /></svg></Task>
      <Task $running aria-label="Word">
        <svg width="30" height="27" viewBox="0 0 30 27"><path d="M7 1q0-1 1-1h21q1 0 1 1v6H7z" fill="#41a5ee" /><path d="M7 7h23v7H7z" fill="#2b7cd3" /><path d="M7 14h23v6H7z" fill="#185abd" /><path d="M7 20h23v6q0 1-1 1H8q-1 0-1-1z" fill="#103f91" /><rect y="6" width="15" height="15" rx="1" fill="#1d5fc0" /><text x="7.500" y="18" textAnchor="middle" fontFamily="Open Sans" fontWeight="700" fontSize="12" fill="#fff">W</text></svg>
      </Task>
      <Task $running aria-label="Terminal"><svg width="31" height="23" viewBox="0 0 31 23"><rect width="31" height="23" rx="2" fill="#3a3a3a" /><path d="M0 4V2q0-2 2-2h18v4z" fill="#c4c4c4" /><path d="M20 0h9q2 0 2 2v2H20z" fill="#6b6b6b" /><path d="M4 8l6 5.500L4 19" fill="none" stroke="#e0e0e0" strokeWidth="3" /><path d="M13 18.500h11" stroke="#e8e8e8" strokeWidth="2.600" /></svg></Task>
    </Apps>
    <Tray>
      <TrayItem $w={40} aria-label="Hidden icons"><Stroke size={16} box={16} w={1.8}><path d="M2 11l6-6 6 6" /></Stroke></TrayItem>
      <TrayItem $w={40} aria-label="Update"><svg width="22" height="22" viewBox="0 0 22 22" fill="none" stroke="#fff" strokeWidth="1.600"><path d="M2 9a9 9 0 0 1 16-4M19 1v6h-6M8 20a9 9 0 0 1-5-4M2 21v-6h6" /><circle cx="16" cy="16" r="5" fill="#ff9500" stroke="none" /></svg></TrayItem>
      <TrayItem $w={40} aria-label="OneDrive"><svg width="22" height="18" viewBox="0 0 22 18"><path d="M4 14a4 4 0 0 1 0-8 6 6 0 0 1 11-2c3 0 5 2 5 5s-2 5-4 5z" fill="#9d9d9d" /><path d="M4 14a4 4 0 0 1 1-8c3-1 6 1 8 8z" fill="#d0d0d0" /><circle cx="15.500" cy="12" r="5.500" fill="#58c4ff" /><path d="M15.500 11v4M15.500 8.500v1.300" stroke="#123" strokeWidth="1.600" /></svg></TrayItem>
      <TrayItem $w={56}><span>POR<br />PTB2</span></TrayItem>
      <TrayItem $w={98} aria-label="Network, volume, battery">
        <Stroke size={20} w={1.6}><path d="M1 8a13 13 0 0 1 18 0M4 11a9 9 0 0 1 12 0M7 14a4.500 4.500 0 0 1 6 0" /><circle cx="10" cy="16.500" r="1" fill="currentColor" /></Stroke>
        <Stroke size={20} w={1.4}><path d="M1 7.500h3.500L9 3.500v13l-4.500-4H1zM12 7.500c1 1.500 1 3.500 0 5M14.500 5.500c2 2.500 2 6.500 0 9M17 3.500c3 3.500 3 9.500 0 13" /></Stroke>
        <Stroke size={20} w={1.4}><path d="M10.500 5h5c1 0 1.500.6 1.500 1.500v7.500c0 .9-.5 1.500-1.500 1.500H4c-1 0-1.500-.5-1.500-1.500M17.500 8h1.500v4.500h-1.500" /><path fill="currentColor" d="M8 1c1 4 1 8.500-2.500 9C2 10.500 0 7 2.500 4.500 4 3 6.500 2.500 8 1zM4 8l-2 4" /></Stroke>
      </TrayItem>
      <Clock>21:34<br />20/06/2025</Clock>
    </Tray>
  </Taskbar>
);

export default function App() {
  return (
    <Desktop>
      <Global />
      <BrowserChrome />
      <LabelStudio />
      <WindowsTaskbar />
    </Desktop>
  );
}
